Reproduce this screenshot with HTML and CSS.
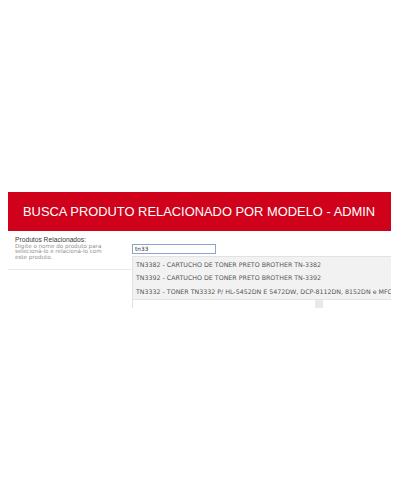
FILE: index.html
```html
<!DOCTYPE html>
<html lang="pt-BR">
<head>
<meta charset="utf-8">
<title>Busca produto relacionado</title>
<link rel="stylesheet" href="styles.css">
</head>
<body>
<div class="page">
  <div class="banner">BUSCA PRODUTO RELACIONADO POR MODELO - ADMIN</div>
  <div class="content">
    <div class="left">
      <div class="label">Produtos Relacionados:</div>
      <div class="desc">Digite o nome do produto para<br>selecioná-lo e relacioná-lo com<br>este produto.</div>
    </div>
    <div class="right">
      <div class="input">tn33</div>
      <div class="menu">
        <div class="item">TN3382 - CARTUCHO DE TONER PRETO BROTHER TN-3382</div>
        <div class="item">TN3392 - CARTUCHO DE TONER PRETO BROTHER TN-3392</div>
        <div class="item">TN3332 - TONER TN3332 P/ HL-5452DN E 5472DW, DCP-8112DN, 8152DN e MFC</div>
      </div>
      <div class="below"><span class="knob"></span></div>
    </div>
  </div>
</div>
</body>
</html>
```
FILE: styles.css
```css
html, body {
  margin: 0;
  padding: 0;
  background: #ffffff;
}

.page {
  padding: 192px 0 0 8px;
  width: 383px;
}

.banner {
  box-sizing: border-box;
  height: 39px;
  padding: 1px 0 0 15px;
  line-height: 38px;
  background: #d0021b;
  color: #ffffff;
  font-family: "Liberation Sans", Arial, sans-serif;
  font-size: 12.9px;
  white-space: nowrap;
}

.content {
  display: flex;
  align-items: flex-start;
}

.left {
  box-sizing: border-box;
  width: 125px;
  height: 39px;
  padding: 5px 0 0 7px;
  border-bottom: 1px solid #ebebeb;
}

.label {
  font-family: "Liberation Sans", Arial, sans-serif;
  font-size: 6.7px;
  line-height: 7.5px;
  color: #3a3a3a;
  white-space: nowrap;
}

.desc {
  font-family: "DejaVu Sans", Verdana, sans-serif;
  font-size: 5.6px;
  line-height: 5.6px;
  color: #8f8f8f;
  white-space: nowrap;
}

.right {
  display: flex;
  flex-direction: column;
  padding-top: 13px;
}

.input {
  box-sizing: border-box;
  width: 84px;
  height: 10px;
  padding-left: 2px;
  border: 1px solid #8aa6cf;
  font-family: "DejaVu Sans", Verdana, sans-serif;
  font-size: 5.8px;
  line-height: 8px;
  color: #333333;
}

.menu {
  box-sizing: border-box;
  width: 259px;
  margin-top: 2px;
  padding: 1px 0;
  border: 1px solid #e2e2e2;
  border-right: none;
  background: #f2f2f2;
  overflow: hidden;
}

.item {
  height: 13.3px;
  line-height: 13.3px;
  padding-left: 3px;
  font-family: "DejaVu Sans", Verdana, sans-serif;
  font-size: 6.3px;
  color: #555555;
  white-space: nowrap;
}

.item-long {
  font-size: 6.2px;
}

.below {
  display: flex;
  height: 8px;
  border-left: 1px solid #e2e2e2;
}

.knob {
  width: 8px;
  height: 8px;
  margin-left: 182px;
  background: #e9e9e9;
}
```
